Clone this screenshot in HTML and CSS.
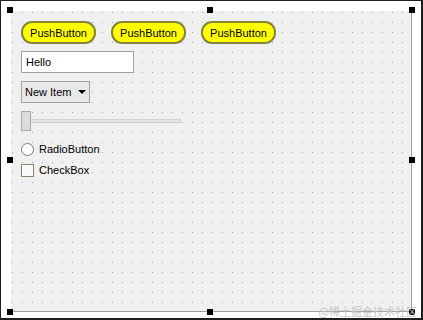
FILE: index.html
```html
<!DOCTYPE html>
<html>
<head>
<meta charset="utf-8">
<link rel="stylesheet" href="styles.css">
</head>
<body>
<div class="frame">
  <div class="form">
    <div class="row buttons">
      <button class="push">PushButton</button>
      <button class="push">PushButton</button>
      <button class="push">PushButton</button>
    </div>
    <div class="lineedit">Hello</div>
    <div class="combo"><span>New Item</span><span class="arrow"></span></div>
    <div class="slider"><div class="handle"></div><div class="groove"></div></div>
    <div class="opt radio"><span class="circle"></span><span>RadioButton</span></div>
    <div class="opt check"><span class="box"></span><span>CheckBox</span></div>

    <span class="h tl"></span><span class="h tm"></span><span class="h tr"></span>
    <span class="h ml"></span><span class="h mr"></span>
    <span class="h bl"></span><span class="h bm"></span><span class="h br"></span>
  </div>
  <div class="wm">@稀土掘金技术社区</div>
</div>
</body>
</html>
```
FILE: styles.css
```css
html, body { margin: 0; padding: 0; }
body { width: 423px; height: 320px; overflow: hidden; background: #fff;
  font-family: "Liberation Sans", Arial, sans-serif; font-size: 11px; color: #000; }
.frame { box-sizing: border-box; width: 423px; height: 320px;
  border-style: solid; border-color: #1e1e1e; border-width: 1px 2px 2px 1px;
  padding: 10px 0 0 10px; position: relative; background: #fff; }
.form { position: relative; box-sizing: border-box; width: 401px; height: 301px;
  background-color: #f0f0f0;
  background-image: radial-gradient(circle at 1.5px 1.5px, #a2a2a2 0.5px, rgba(240,240,240,0) 0.9px);
  background-size: 10px 10px; background-position: 0 0;
  border-right: 1px solid #a0a0a0; border-bottom: 1px solid #a0a0a0;
  padding: 10px 0 0 10px; display: flex; flex-direction: column; align-items: flex-start; }
.row { display: flex; gap: 15px; }
.push { box-sizing: border-box; width: 75px; height: 23px; border: 2px solid #84843a;
  border-radius: 11px; background: #ffff00; font: 11px "Liberation Sans", Arial, sans-serif;
  color: #000; padding: 0; margin: 0; }
.lineedit { box-sizing: border-box; margin-top: 7px; width: 113px; height: 22px;
  border: 1px solid #a0a0a0; background: #fff; padding: 0 4px; line-height: 20px; }
.combo { box-sizing: border-box; margin-top: 8px; width: 69px; height: 22px;
  border: 1px solid #a0a0a0; background: #e9e9e9; display: flex; align-items: center;
  padding: 0 0 0 3px; gap: 7px; }
.arrow { width: 0; height: 0; border-left: 4px solid transparent; border-right: 4px solid transparent;
  border-top: 4px solid #000; }
.slider { margin-top: 8px; display: flex; align-items: center; width: 160px; height: 20px; }
.handle { box-sizing: border-box; width: 10px; height: 20px; border: 1px solid #a8a8a8;
  background: #dcdcdc; flex: none; }
.groove { box-sizing: border-box; flex: 1; height: 4px; border: 1px solid #d0d0d0;
  border-left: none; background: #e4e4e4; }
.opt { display: flex; align-items: center; gap: 5px; height: 16px; }
.radio { margin-top: 10px; }
.check { margin-top: 5px; }
.circle { box-sizing: border-box; width: 13px; height: 13px; border-radius: 50%;
  border: 1px solid #7a7a7a; background: #fff; }
.box { box-sizing: border-box; width: 13px; height: 13px; border: 1px solid #85856d; background: #fafafa; }
.h { position: absolute; width: 6px; height: 6px; background: #000; }
.tl { left: -4px; top: -4px; }
.tm { left: 196px; top: -4px; }
.tr { right: -4px; top: -4px; }
.ml { left: -4px; top: 146px; }
.mr { right: -4px; top: 146px; }
.bl { left: -4px; bottom: -4px; }
.bm { left: 196px; bottom: -4px; }
.br { right: -4px; bottom: -4px; }
.wm { position: absolute; right: 4px; bottom: 0px; font-family: "Noto Sans CJK SC", sans-serif;
  font-size: 11px; color: #c4c4c4; line-height: 14px; }
```
